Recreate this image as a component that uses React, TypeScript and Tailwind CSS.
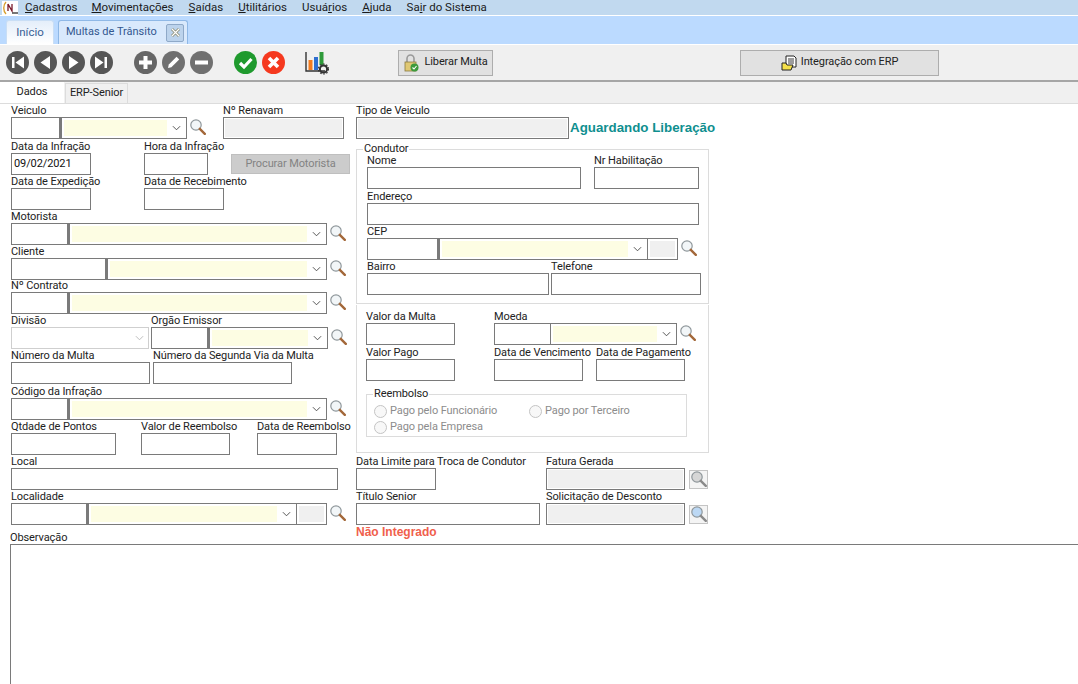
import React from "react";

const FONT = "font-['Roboto','Liberation_Sans',Arial,sans-serif]";
const BOLD = "font-['Liberation_Sans',Arial,sans-serif] font-bold tracking-normal";

function Input({ w, gray }: { w: string; gray?: boolean }) {
  return (
    <div className={`${w} h-[22px] border border-[#7a7a7a] p-[1px] bg-white`}>
      {gray && <div className="h-full bg-[#f0f0f0]" />}
    </div>
  );
}

function Label({ children }: { children: React.ReactNode }) {
  return <div className="h-[12px] leading-[12px] whitespace-nowrap text-[#222]">{children}</div>;
}

function Field({ label, w, gray, value, className = "" }: { label: string; w: string; gray?: boolean; value?: string; className?: string }) {
  return (
    <div className={`${w} shrink-0 ${className}`}>
      <Label>{label}</Label>
      {value ? (
        <div className="h-[22px] border border-[#7a7a7a] bg-white flex items-center pl-[2px] text-[#111]">{value}</div>
      ) : (
        <Input w="w-full" gray={gray} />
      )}
    </div>
  );
}

function Search({ className = "", tint = "#f2f6f8", handle = "#a3683a" }: { className?: string; tint?: string; handle?: string }) {
  return (
    <svg viewBox="0 0 16 16" className={`w-[16px] h-[16px] shrink-0 ${className}`}>
      <circle cx="6" cy="6" r="5.2" fill={tint} stroke="#8f979b" strokeWidth="1.2" />
      <path d="M9.8 9.8 L14.8 14.8" stroke={handle} strokeWidth="2.4" strokeLinecap="round" />
    </svg>
  );
}

// lookup combo: code box + yellow combo + optional gray box + magnifier
function Lookup({ code, combo, extra, thin }: { code: string; combo: string; extra?: boolean; thin?: boolean }) {
  return (
    <div className="flex items-center">
      <div className={`${code} h-[22px] border border-[#7a7a7a] bg-white`} />
      <div className={`${combo} h-[22px] border border-[#7a7a7a] ${thin ? "border-l-0" : "border-l-2"} flex items-center p-[2px] pr-0 bg-white`}>
        <div className="flex-1 h-full bg-[#fdfde3]" />
        <svg viewBox="0 0 10 6" className="w-[9px] h-[6px] mx-[5px] shrink-0" fill="none">
          <path d="M1 1 L5 5 L9 1" stroke="#444" strokeWidth="1" />
        </svg>
      </div>
      {extra && (
        <div className="w-[30px] h-[22px] border border-l-0 border-[#7a7a7a] p-[2px] bg-white">
          <div className="h-full bg-[#f0f0f0]" />
        </div>
      )}
      <Search className="ml-[3px] -mt-[2px]" />
    </div>
  );
}

function Radio({ label, className = "" }: { label: string; className?: string }) {
  return (
    <div className={`flex items-center text-[#8c8c8c] whitespace-nowrap ${className}`}>
      <span className="w-[13px] h-[13px] rounded-full border border-[#c4c4c4] bg-[#f8f8f8] mr-[3px]" />
      {label}
    </div>
  );
}

function RoundBtn({ bg, className = "", children }: { bg: string; className?: string; children: React.ReactNode }) {
  return (
    <div className={`w-[23px] h-[23px] rounded-full ${bg} flex items-center justify-center shrink-0 ${className}`}>
      <svg viewBox="0 0 23 23" className="w-[23px] h-[23px]">{children}</svg>
    </div>
  );
}

function Menu({ pre, u, post, className }: { pre?: string; u: string; post: string; className: string }) {
  return (
    <span className={`whitespace-nowrap ${className}`}>
      {pre}
      <span className="underline underline-offset-1">{u}</span>
      {post}
    </span>
  );
}

export default function App() {
  return (
    <div className={`w-full h-[684px] overflow-hidden bg-white text-[11px] tracking-[-0.1px] ${FONT}`}>
      {/* menu bar */}
      <div className="h-[15px] bg-[#c1d9ef] flex items-center text-[11.5px] tracking-normal leading-[15px] text-[#1a1a1a]">
        <svg viewBox="0 0 16 14" className="w-[16px] h-[14px] ml-[2px] bg-white shrink-0">
          <path d="M4 1 C1 4 1 10 4 13" stroke="#d8a030" strokeWidth="1.4" fill="none" />
          <path d="M6 3 V10 M6 3 L10 10 V3" stroke="#7a1a2a" strokeWidth="1.3" fill="none" />
          <path d="M10 12 H16" stroke="#555" strokeWidth="1.6" />
        </svg>
        <Menu u="C" post="adastros" className="ml-[7px]" />
        <Menu u="M" post="ovimentações" className="ml-[14px]" />
        <Menu u="S" post="aídas" className="ml-[15px]" />
        <Menu u="U" post="tilitários" className="ml-[15px]" />
        <Menu pre="Usuá" u="r" post="ios" className="ml-[15px]" />
        <Menu u="A" post="juda" className="ml-[15px]" />
        <Menu pre="Sa" u="i" post="r do Sistema" className="ml-[15px]" />
      </div>

      {/* tab strip */}
      <div className="h-[30px] bg-[#bbdaff] border-t border-b border-white flex items-end pl-[6px] tracking-normal">
        <div className="w-[48px] h-[24px] bg-gradient-to-b from-[#e4eefa] to-white border border-b-0 border-[#c9def5] rounded-t-[3px] flex items-center justify-center text-[#3a5f96] text-[11.5px]">
          Início
        </div>
        <div className="w-[130px] h-[24px] ml-[4px] bg-[#d9e9fc] border border-b-0 border-[#8fb8e6] rounded-t-[3px] flex items-center pl-[7px] text-[#33578f] text-[11px] whitespace-nowrap">
          <span className="w-[100px] shrink-0">Multas de Trânsito</span>
          <div className="w-[18px] h-[18px] bg-[#bcd3ec] border border-[#8fa9c8] rounded-[2px] flex items-center justify-center shrink-0">
            <svg viewBox="0 0 11 11" className="w-[11px] h-[11px]">
              <path d="M2 2 L9 9 M9 2 L2 9" stroke="#8a8a70" strokeWidth="2.8" />
              <path d="M2 2 L9 9 M9 2 L2 9" stroke="#fff" strokeWidth="1.2" />
            </svg>
          </div>
        </div>
      </div>

      {/* toolbar */}
      <div className="h-[37px] bg-[#f0f0f0] border-b-2 border-[#a6a6a6] flex items-center pl-[6px]">
        <RoundBtn bg="bg-[#565656]">
          <path d="M6 6 H8.5 V17 H6 Z M18 5.5 V17.5 L9.5 11.5 Z" fill="#fff" />
        </RoundBtn>
        <RoundBtn bg="bg-[#565656]" className="ml-[5px]">
          <path d="M16 5 V18 L6.5 11.5 Z" fill="#fff" />
        </RoundBtn>
        <RoundBtn bg="bg-[#565656]" className="ml-[5px]">
          <path d="M7 5 V18 L16.5 11.5 Z" fill="#fff" />
        </RoundBtn>
        <RoundBtn bg="bg-[#565656]" className="ml-[5px]">
          <path d="M14.5 6 H17 V17 H14.5 Z M5 5.5 V17.5 L13.5 11.5 Z" fill="#fff" />
        </RoundBtn>
        <RoundBtn bg="bg-[#666666]" className="ml-[21px]">
          <path d="M9.5 5 H13.5 V9.5 H18 V13.5 H13.5 V18 H9.5 V13.5 H5 V9.5 H9.5 Z" fill="#fff" />
        </RoundBtn>
        <RoundBtn bg="bg-[#707070]" className="ml-[5px]">
          <path d="M6 17 L6.8 13.6 L14.6 5.8 L17.2 8.4 L9.4 16.2 Z" fill="#fff" />
        </RoundBtn>
        <RoundBtn bg="bg-[#707070]" className="ml-[5px]">
          <path d="M5 9.5 H18 V13.5 H5 Z" fill="#fff" />
        </RoundBtn>
        <RoundBtn bg="bg-[#1f9a2e]" className="ml-[21px]">
          <path d="M6 12 L10 16 L17.5 8" fill="none" stroke="#fff" strokeWidth="3.2" />
        </RoundBtn>
        <RoundBtn bg="bg-[#f5391f]" className="ml-[5px]">
          <path d="M7 7 L16 16 M16 7 L7 16" fill="none" stroke="#fff" strokeWidth="3.6" />
        </RoundBtn>
        <svg viewBox="0 0 24 24" className="w-[24px] h-[24px] ml-[20px] shrink-0">
          <path d="M1 1 V20 H20" fill="none" stroke="#333" strokeWidth="1.4" />
          <rect x="3.5" y="9" width="4" height="10" fill="#f57c1f" />
          <rect x="9" y="6" width="4" height="13" fill="#2f6fd0" />
          <rect x="14.5" y="1" width="4" height="13" fill="#2f9a3a" />
          <circle cx="18.5" cy="18" r="3.6" fill="none" stroke="#333" strokeWidth="2" />
          <circle cx="18.5" cy="18" r="5" fill="none" stroke="#333" strokeWidth="1.2" strokeDasharray="1.6 1.6" />
        </svg>
        <div className="w-[95px] h-[26px] ml-[69px] bg-[#e1e1e1] border border-[#adadad] flex items-center justify-center text-[#222] shrink-0">
          <svg viewBox="0 0 16 18" className="w-[16px] h-[18px] mr-[5px]">
            <path d="M4 8 V4.5 a3.5 3.5 0 0 1 7 0 V8" fill="none" stroke="#9a9a9a" strokeWidth="1.6" />
            <rect x="2" y="8" width="11" height="9" fill="#e0c874" stroke="#8a7a40" strokeWidth="0.8" />
            <circle cx="11.5" cy="13.5" r="4" fill="#3c9a3c" />
            <path d="M9.5 13.5 L11 15 L13.5 12" fill="none" stroke="#fff" strokeWidth="1.1" />
          </svg>
          Liberar Multa
        </div>
        <div className="w-[199px] h-[26px] ml-[247px] bg-[#e1e1e1] border border-[#adadad] flex items-center justify-center text-[#222] shrink-0">
          <svg viewBox="0 0 16 16" className="w-[16px] h-[16px] mr-[4px]">
            <path d="M5 1 H13 L15 3 V12 H5 Z" fill="#fff" stroke="#222" strokeWidth="1" />
            <path d="M7 4 H13 M7 6 H13 M7 8 H13" stroke="#222" strokeWidth="0.9" />
            <path d="M1 8 H5 L6 10 H12 L10 15 H1 Z" fill="#f4e04a" stroke="#222" strokeWidth="1" />
          </svg>
          Integração com ERP
        </div>
      </div>

      {/* page tabs */}
      <div className="h-[22px] bg-[#f0f0f0] border-b border-[#dcdcdc] flex items-end">
        <div className="w-[64px] h-[21px] pb-[1px] bg-white flex items-center justify-center text-[#222]">Dados</div>
        <div className="w-[63px] h-[20px] ml-[1px] border border-b-0 border-[#dcdcdc] flex items-center justify-center text-[#222]">ERP-Senior</div>
      </div>

      {/* form */}
      <div className="flex pt-[1px]">
        <div className="w-[356px] shrink-0 pl-[11px]">
          <div className="flex">
            <div>
              <Label>Veiculo</Label>
              <Lookup code="w-[49px]" combo="w-[127px]" />
            </div>
            <Field label="Nº Renavam" w="w-[121px]" gray className="ml-[17px]" />
          </div>
          <div className="flex mt-[2px]">
            <Field label="Data da Infração" w="w-[80px]" value="09/02/2021" />
            <Field label="Hora da Infração" w="w-[64px]" className="ml-[53px]" />
            <div className="w-[119px] h-[20px] ml-[23px] mt-[13px] bg-[#cccccc] border border-[#bfbfbf] flex items-center justify-center text-[#838383]">
              Procurar Motorista
            </div>
          </div>
          <div className="flex mt-[1px]">
            <Field label="Data de Expedição" w="w-[80px]" />
            <Field label="Data de Recebimento" w="w-[80px]" className="ml-[53px]" />
          </div>
          <div className="mt-[1px]">
            <Label>Motorista</Label>
            <Lookup code="w-[57px]" combo="w-[259px]" />
          </div>
          <div className="mt-[1px]">
            <Label>Cliente</Label>
            <Lookup code="w-[95px]" combo="w-[221px]" />
          </div>
          <div>
            <Label>Nº Contrato</Label>
            <Lookup code="w-[57px]" combo="w-[259px]" />
          </div>
          <div className="flex mt-[1px]">
            <div>
              <Label>Divisão</Label>
              <div className="w-[138px] h-[22px] border border-[#cfcfcf] bg-white flex items-center justify-end">
                <svg viewBox="0 0 10 6" className="w-[9px] h-[6px] mr-[4px]" fill="none">
                  <path d="M1 1 L5 5 L9 1" stroke="#b5b5b5" strokeWidth="1" />
                </svg>
              </div>
            </div>
            <div className="ml-[2px]">
              <Label>Orgão Emissor</Label>
              <Lookup code="w-[57px]" combo="w-[120px]" />
            </div>
          </div>
          <div className="flex mt-[1px]">
            <Field label="Número da Multa" w="w-[139px]" />
            <Field label="Número da Segunda Via da Multa" w="w-[139px]" className="ml-[3px]" />
          </div>
          <div className="mt-[2px]">
            <Label>Código da Infração</Label>
            <Lookup code="w-[57px]" combo="w-[259px]" />
          </div>
          <div className="flex mt-[1px]">
            <Field label="Qtdade de Pontos" w="w-[105px]" />
            <Field label="Valor de Reembolso" w="w-[89px]" className="ml-[25px]" />
            <Field label="Data de Reembolso" w="w-[80px]" className="ml-[27px]" />
          </div>
          <Field label="Local" w="w-[327px]" className="mt-[1px]" />
          <div className="mt-[1px]">
            <Label>Localidade</Label>
            <Lookup code="w-[76px]" combo="w-[210px]" extra />
          </div>
        </div>

        <div className="w-[353px] shrink-0">
          <div className="flex">
            <Field label="Tipo de Veiculo" w="w-[213px]" gray />
            <div className={`ml-[1px] mt-[15px] h-[16px] leading-[16px] text-[13.33px] text-[#0f8f8f] whitespace-nowrap ${BOLD}`}>
              Aguardando Liberação
            </div>
          </div>

          <div className="relative mt-[10px] h-[155px] border border-[#dcdcdc] pl-[10px] pt-[5px]">
            <div className="absolute -top-[7px] left-[6px] px-[1px] h-[11px] leading-[11px] bg-white text-[#222]">Condutor</div>
            <div className="flex">
              <Field label="Nome" w="w-[214px]" />
              <Field label="Nr Habilitação" w="w-[105px]" className="ml-[13px]" />
            </div>
            <Field label="Endereço" w="w-[332px]" className="mt-[2px]" />
            <div className="mt-[1px]">
              <Label>CEP</Label>
              <Lookup code="w-[71px]" combo="w-[210px]" extra />
            </div>
            <div className="flex mt-[1px]">
              <Field label="Bairro" w="w-[182px]" />
              <Field label="Telefone" w="w-[150px]" className="ml-[2px]" />
            </div>
          </div>

          <div className="mt-[1px] h-[148px] border border-t-0 border-[#dcdcdc] pl-[9px] pt-[6px]">
            <div className="flex">
              <Field label="Valor da Multa" w="w-[89px]" />
              <div className="ml-[39px]">
                <Label>Moeda</Label>
                <Lookup code="w-[57px]" combo="w-[126px]" thin />
              </div>
            </div>
            <div className="flex mt-[2px]">
              <Field label="Valor Pago" w="w-[89px]" />
              <Field label="Data de Vencimento" w="w-[89px]" className="ml-[39px]" />
              <Field label="Data de Pagamento" w="w-[89px]" className="ml-[13px]" />
            </div>
            <div className="relative mt-[13px] w-[321px] h-[43px] border border-[#dcdcdc] pl-[7px] pt-[8px]">
              <div className="absolute -top-[7px] left-[6px] px-[1px] h-[11px] leading-[11px] bg-white text-[#222]">Reembolso</div>
              <div className="flex h-[16px]">
                <Radio label="Pago pelo Funcionário" className="w-[155px]" />
                <Radio label="Pago por Terceiro" />
              </div>
              <Radio label="Pago pela Empresa" className="h-[16px]" />
            </div>
          </div>

          <div className="flex mt-[3px]">
            <div className="w-[190px]">
              <Field label="Data Limite para Troca de Condutor" w="w-[80px]" />
            </div>
            <div>
              <Label>Fatura Gerada</Label>
              <div className="flex items-center">
                <Input w="w-[139px]" gray />
                <div className="w-[19px] h-[19px] ml-[4px] bg-[#f4f4f4] border border-[#c4c4c4] flex items-center justify-center">
                  <Search tint="#d6d6d6" handle="#8a8a8a" />
                </div>
              </div>
            </div>
          </div>
          <div className="flex mt-[1px]">
            <div className="w-[190px]">
              <Field label="Título Senior" w="w-[184px]" />
              <div className={`mt-[1px] h-[12px] leading-[12px] text-[12px] text-[#f0604c] whitespace-nowrap ${BOLD}`}>Não Integrado</div>
            </div>
            <div>
              <Label>Solicitação de Desconto</Label>
              <div className="flex items-center">
                <Input w="w-[139px]" gray />
                <div className="w-[19px] h-[19px] ml-[4px] bg-[#f4f4f4] border border-[#c4c4c4] flex items-center justify-center">
                  <Search tint="#bcd8f4" handle="#8a8a8a" />
                </div>
              </div>
            </div>
          </div>
        </div>
      </div>

      {/* observacao */}
      <div className="pl-[10px] -mt-[6px]">
        <Label>Observação</Label>
        <div className="h-[200px] border border-[#7a7a7a] border-r-0 bg-white" />
      </div>
    </div>
  );
}
